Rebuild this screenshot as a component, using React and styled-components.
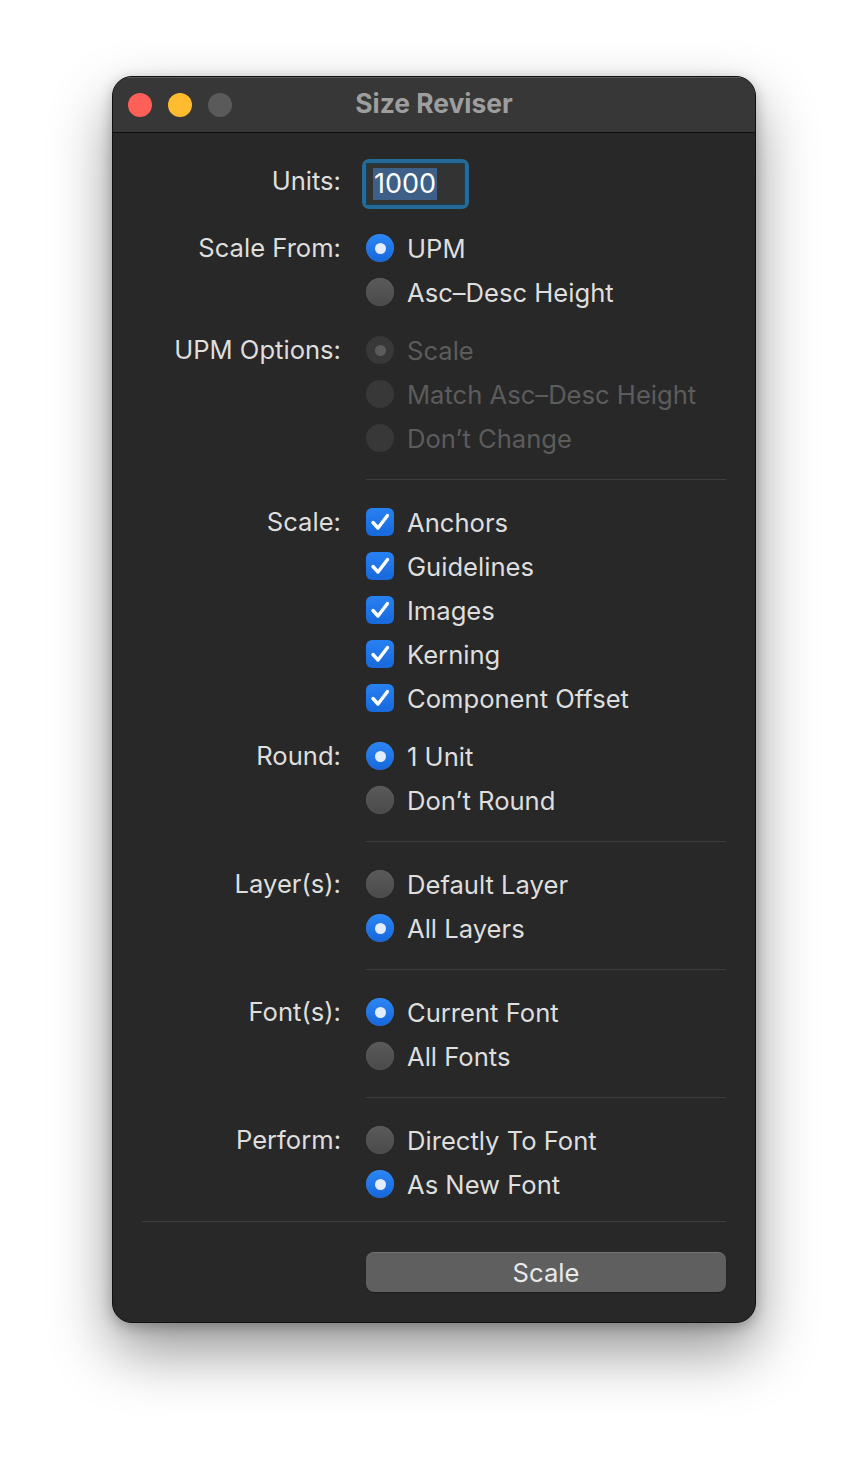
import React from "react";
import styled, { createGlobalStyle } from "styled-components";

const GlobalStyle = createGlobalStyle`
  html, body {
    margin: 0;
    padding: 0;
    background: #ffffff;
  }
  body {
    font-family: Inter, "Noto Sans", "Liberation Sans", sans-serif;
    -webkit-font-smoothing: antialiased;
  }
`;

const Page = styled.div`
  width: 868px;
  height: 1470px;
  padding-top: 76px;
  box-sizing: border-box;
`;

const Window = styled.div`
  width: 644px;
  margin: 0 auto;
  box-sizing: border-box;
  border: 1px solid #101010;
  border-radius: 20px;
  overflow: hidden;
  background: #282828;
  box-shadow: 0 28px 60px rgba(0, 0, 0, 0.42), 0 4px 14px rgba(0, 0, 0, 0.25),
    inset 0 1px 0 rgba(255, 255, 255, 0.22);
`;

const TitleBar = styled.div`
  position: relative;
  height: 55px;
  background: #373737;
  border-bottom: 1px solid #0e0e0e;
  display: flex;
  align-items: center;
  padding-left: 15px;
  box-shadow: inset 0 1px 0 rgba(255, 255, 255, 0.18);
`;

const Lights = styled.div`
  display: flex;
  gap: 16px;
`;

const Light = styled.span`
  width: 24px;
  height: 24px;
  border-radius: 50%;
  background: ${(p) => p.$color};
`;

const Title = styled.div`
  position: absolute;
  left: 0;
  right: 0;
  top: 0;
  bottom: 3px;
  display: flex;
  align-items: center;
  justify-content: center;
  font-size: 26.4px;
  font-weight: 700;
  color: #9e9e9e;
  pointer-events: none;
`;

const Content = styled.div`
  padding: 26px 29px 30px 29px;
  display: flex;
  flex-direction: column;
`;

const Group = styled.div`
  display: grid;
  grid-template-columns: 199px 360px;
  column-gap: 25px;
  & + & {
    margin-top: 14px;
  }
`;

const UnitsGroup = styled(Group)`
  margin-bottom: 3px;
  align-items: center;
`;

const Label = styled.div`
  text-align: right;
  font-size: 25.6px;
  color: #dedede;
  height: 44px;
  line-height: 44px;
  white-space: nowrap;
  ${(p) => p.$raise && "padding-bottom: 6px;"}
`;

const Options = styled.div`
  display: flex;
  flex-direction: column;
`;

const Option = styled.div`
  height: 44px;
  display: flex;
  align-items: center;
  gap: 13px;
  font-size: 25.6px;
  white-space: nowrap;
  color: ${(p) => (p.$disabled ? "#5c5c5c" : "#dedede")};
`;

const Radio = styled.span`
  width: 28px;
  height: 28px;
  border-radius: 50%;
  flex-shrink: 0;
  display: flex;
  align-items: center;
  justify-content: center;
  background: ${(p) =>
    p.$disabled
      ? "#383838"
      : p.$on
      ? "linear-gradient(#2b86f6, #1767da)"
      : "linear-gradient(#5a5a5a, #4a4a4a)"};
  box-shadow: ${(p) =>
    p.$disabled ? "none" : "inset 0 0 0 0.5px rgba(255,255,255,0.08)"};
  &::after {
    content: "";
    display: ${(p) => (p.$on ? "block" : "none")};
    width: 11px;
    height: 11px;
    border-radius: 50%;
    background: ${(p) => (p.$disabled ? "#5b5b5b" : "#e2ecfb")};
  }
`;

const Check = styled.span`
  width: 28px;
  height: 28px;
  border-radius: 6px;
  flex-shrink: 0;
  background: linear-gradient(#2781f3, #1868da);
  display: flex;
  align-items: center;
  justify-content: center;
`;

const Divider = styled.div`
  height: 1px;
  background: #3d3d3d;
  margin: ${(p) => (p.$full ? "15px 0 30px 0" : "19px 0 20px 224px")};
`;

const FocusRing = styled.div`
  width: 107px;
  height: 50px;
  margin-left: -4px;
  box-sizing: border-box;
  border: 4px solid #236c99;
  border-radius: 7px;
  display: flex;
`;

const Field = styled.div`
  flex: 1;
  background: #333333;
  border: 1px solid #1c3e55;
  display: flex;
  align-items: center;
  padding-left: 6px;
`;

const Selected = styled.span`
  background: #3e5f88;
  color: #ffffff;
  font-size: 27px;
  line-height: 32px;
  height: 32px;
  padding: 0 1px;
`;

const ButtonRow = styled(Group)``;

const Button = styled.button`
  grid-column: 2;
  height: 40px;
  border: none;
  border-radius: 8px;
  background: #5f5f5f;
  box-shadow: inset 0 1px 0 rgba(255, 255, 255, 0.12), 0 1px 1px rgba(0, 0, 0, 0.3);
  color: #e9e9e9;
  font-family: inherit;
  font-size: 25.6px;
  padding: 0;
`;

const CheckMark = () => (
  <svg width="24" height="24" viewBox="0 0 24 24">
    <path
      d="M5 12.5 L10 18 L19.5 5.5"
      fill="none"
      stroke="#ffffff"
      strokeWidth="3.4"
      strokeLinecap="round"
      strokeLinejoin="round"
    />
  </svg>
);

const RadioGroup = ({ label, items }) => (
  <Group>
    <Label>{label}</Label>
    <Options>
      {items.map((it) => (
        <Option key={it.text} $disabled={it.disabled}>
          <Radio $on={it.on} $disabled={it.disabled} />
          <span>{it.text}</span>
        </Option>
      ))}
    </Options>
  </Group>
);

export default function App() {
  return (
    <Page>
      <GlobalStyle />
      <Window>
        <TitleBar>
          <Lights>
            <Light $color="#fe5f57" />
            <Light $color="#febc2e" />
            <Light $color="#5a5a5a" />
          </Lights>
          <Title>Size Reviser</Title>
        </TitleBar>
        <Content>
          <UnitsGroup>
            <Label $raise>Units:</Label>
            <FocusRing>
              <Field>
                <Selected>1000</Selected>
              </Field>
            </FocusRing>
          </UnitsGroup>
          <RadioGroup
            label="Scale From:"
            items={[{ text: "UPM", on: true }, { text: "Asc–Desc Height" }]}
          />
          <RadioGroup
            label="UPM Options:"
            items={[
              { text: "Scale", on: true, disabled: true },
              { text: "Match Asc–Desc Height", disabled: true },
              { text: "Don’t Change", disabled: true },
            ]}
          />
          <Divider />
          <Group>
            <Label>Scale:</Label>
            <Options>
              {["Anchors", "Guidelines", "Images", "Kerning", "Component Offset"].map(
                (t) => (
                  <Option key={t}>
                    <Check>
                      <CheckMark />
                    </Check>
                    <span>{t}</span>
                  </Option>
                )
              )}
            </Options>
          </Group>
          <RadioGroup
            label="Round:"
            items={[{ text: "1 Unit", on: true }, { text: "Don’t Round" }]}
          />
          <Divider />
          <RadioGroup
            label="Layer(s):"
            items={[{ text: "Default Layer" }, { text: "All Layers", on: true }]}
          />
          <Divider />
          <RadioGroup
            label="Font(s):"
            items={[{ text: "Current Font", on: true }, { text: "All Fonts" }]}
          />
          <Divider />
          <RadioGroup
            label="Perform:"
            items={[{ text: "Directly To Font" }, { text: "As New Font", on: true }]}
          />
          <Divider $full />
          <ButtonRow>
            <Button>Scale</Button>
          </ButtonRow>
        </Content>
      </Window>
    </Page>
  );
}
